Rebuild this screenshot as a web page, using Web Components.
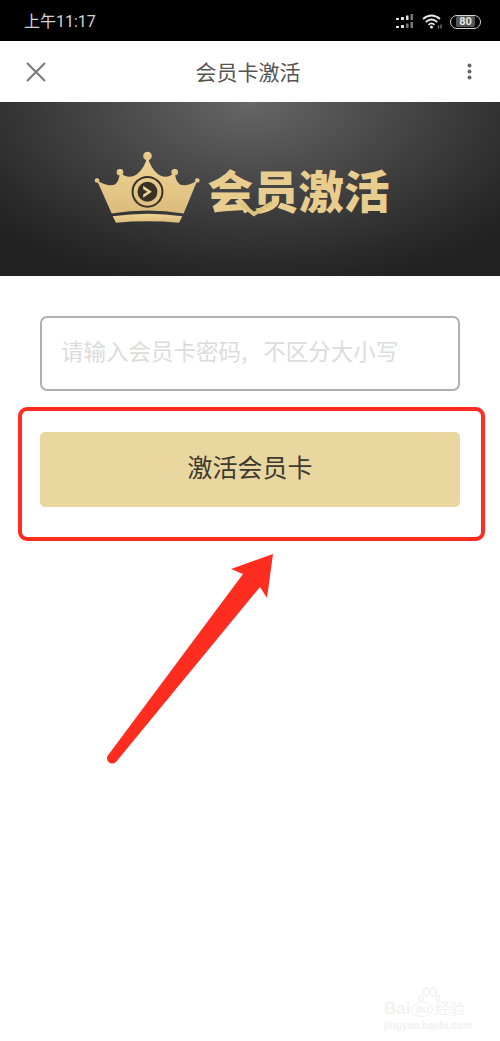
<!DOCTYPE html>
<html lang="zh">
<head>
<meta charset="utf-8">
<title>会员卡激活</title>
<style>
  html, body { margin: 0; background: #fff; }
  body { font-family: "Noto Sans CJK SC", "Liberation Sans", sans-serif; }
  #page { position: relative; width: 500px; height: 1041px; overflow: hidden; }
</style>
</head>
<body>
<div id="page">
  <status-bar time="上午11:17" battery="80"></status-bar>
  <nav-bar>会员卡激活</nav-bar>
  <promo-banner>会员激活</promo-banner>
  <activate-form placeholder="请输入会员卡密码, 不区分大小写">激活会员卡</activate-form>
  <red-markup></red-markup>
  <baidu-mark></baidu-mark>
</div>

<script>
class StatusBar extends HTMLElement {
  connectedCallback() {
    this.attachShadow({ mode: "open" });
    this.shadowRoot.innerHTML = `
      <style>
        :host { display: flex; align-items: center; justify-content: space-between; height: 41px; padding: 0 19px 0 24px; box-sizing: border-box; background: #000; color: #d4d4d4; }
        .time { font: 16px/1 Roboto, "Noto Sans CJK SC", sans-serif; position: relative; top: 1px; }
        .icons { display: flex; align-items: center; gap: 7px; position: relative; top: 1px; }
        svg { display: block; }
        .batt { width: 31px; height: 14px; box-sizing: border-box; border: 1.5px solid #d4d4d4; border-radius: 7px; display: flex; align-items: center; justify-content: center; }
        .batt span { background: #555; color: #e6e6e6; font: 700 11px/11px Roboto, sans-serif; padding: 0 3px; border-radius: 2px; }
      </style>
      <div class="time">${this.getAttribute("time")}</div>
      <div class="icons">
        <svg width="20" height="15" viewBox="0 0 20 15" fill="#e0e0e0">
          <rect x="1" y="4" width="3" height="2"/><rect x="6" y="3" width="3" height="3"/><rect x="11" y="1.500" width="2.500" height="4.500"/><rect x="15.500" y="0" width="2.500" height="6" fill="#777"/>
          <rect x="1" y="12" width="3" height="2"/><rect x="6" y="11" width="3" height="3"/><rect x="11" y="9.500" width="2.500" height="4.500" fill="#777"/><rect x="15.500" y="8" width="2.500" height="6" fill="#777"/>
        </svg>
        <svg width="21" height="15" viewBox="0 0 21 15" fill="none" stroke="#e8e8e8" stroke-width="1.800">
          <path d="M1 5 Q9.500 -2 18 5"/><path d="M3.800 8 Q9.500 3 15.200 8"/><path d="M6.500 10.800 Q9.500 8 12.500 10.800"/>
          <circle cx="9.500" cy="13" r="1.500" fill="#e8e8e8" stroke="none"/>
          <path d="M16.500 14.500v-3M19 14.500v-4" stroke="#888" stroke-width="1.200"/>
        </svg>
        <div class="batt"><span>${this.getAttribute("battery")}</span></div>
      </div>`;
  }
}

class NavBar extends HTMLElement {
  connectedCallback() {
    this.attachShadow({ mode: "open" });
    this.shadowRoot.innerHTML = `
      <style>
        :host { display: grid; grid-template-columns: 1fr auto 1fr; align-items: center; height: 61px; padding: 0 28px 0 26px; box-sizing: border-box; background: #fff; color: #555; }
        .title { font-size: 21px; line-height: 1; position: relative; left: -1px; }
        svg { display: block; }
        .more { justify-self: end; }
      </style>
      <svg width="20" height="20" viewBox="0 0 20 20" stroke="#777" stroke-width="2" fill="none"><path d="M1 1 L19 19 M19 1 L1 19"/></svg>
      <div class="title"><slot></slot></div>
      <svg class="more" width="5" height="17" viewBox="0 0 5 17" fill="#666"><circle cx="2.500" cy="2.500" r="2"/><circle cx="2.500" cy="8.500" r="2"/><circle cx="2.500" cy="14.500" r="2"/></svg>`;
  }
}

class PromoBanner extends HTMLElement {
  connectedCallback() {
    this.attachShadow({ mode: "open" });
    this.shadowRoot.innerHTML = `
      <style>
        :host { display: flex; align-items: center; justify-content: center; gap: 6px; height: 174px; padding-right: 16px; box-sizing: border-box; background: radial-gradient(340px 190px at 50% 0, #666 0%, #464646 45%, #2a2a2a 85%, #222 100%); }
        svg { display: block; }
        .crown { position: relative; top: -2px; }
        .word { position: relative; top: 1px; font-size: 45.500px; line-height: 1; font-weight: 900; color: #e9cd8e; white-space: nowrap; }
        .tick { position: absolute; left: 32px; top: 34px; }
      </style>
      <svg class="crown" width="107" height="73" viewBox="45 55 320 220">
        <defs><linearGradient id="gold" x1="0" y1="0" x2="0" y2="1"><stop offset="0" stop-color="#efd595"/><stop offset="1" stop-color="#dcbc7c"/></linearGradient></defs>
        <g fill="url(#gold)">
          <circle cx="53" cy="144" r="7"/><circle cx="122" cy="119" r="10"/><circle cx="205" cy="70" r="13"/><circle cx="287" cy="119" r="10"/><circle cx="355" cy="144" r="7"/>
          <path d="M53 144 Q88 165 108 155 Q120 145 122 119 Q146 142 172 126 Q196 108 205 70 Q214 108 238 126 Q264 142 287 119 Q289 145 302 155 Q322 165 355 144 L314 243 Q205 226 97 243 Z"/>
          <path d="M100 252 Q205 236 310 252 L300 271 Q205 262 110 271 Z"/>
        </g>
        <circle cx="205" cy="178" r="45" fill="none" stroke="#3a3125" stroke-width="6"/>
        <circle cx="205" cy="178" r="30" fill="#3a3125"/>
        <path d="M192 160 L218 178 L192 196 L192 186 L205 178 L192 170 Z" fill="#f0d592"/>
      </svg>
      <div class="word"><slot></slot>
        <svg class="tick" width="40" height="16" viewBox="0 0 40 16" fill="none" stroke="#e0c27f" stroke-width="4"><path d="M2 3 L15 13 L33 2"/></svg>
      </div>`;
  }
}

class ActivateForm extends HTMLElement {
  connectedCallback() {
    this.attachShadow({ mode: "open" });
    this.shadowRoot.innerHTML = `
      <style>
        :host { display: flex; flex-direction: column; gap: 41px; padding: 40px 40px 0; }
        .field { height: 75px; box-sizing: border-box; border: 2px solid #b0b0b0; border-radius: 7px; display: flex; align-items: center; padding: 0 0 7px 19px; color: #dcdcdc; font-size: 22.500px; word-spacing: 11px; white-space: nowrap; }
        .btn { height: 75px; box-sizing: border-box; padding-bottom: 7px; border-radius: 5px; background: #e9d79f; color: #3c3a30; font-size: 25px; display: flex; align-items: center; justify-content: center; }
      </style>
      <div class="field">${this.getAttribute("placeholder")}</div>
      <div class="btn"><slot></slot></div>`;
  }
}

class RedMarkup extends HTMLElement {
  connectedCallback() {
    this.attachShadow({ mode: "open" });
    this.shadowRoot.innerHTML = `
      <style>
        :host { position: absolute; inset: 0; pointer-events: none; }
        svg { display: block; }
      </style>
      <svg width="500" height="1041" viewBox="0 0 500 1041">
        <rect x="20" y="409" width="463" height="130" rx="7" fill="none" stroke="#ff2d20" stroke-width="4"/>
        <path d="M273 554 L231 569 L243 574 L107.500 756 Q106 759 108.500 762 Q112 765 116 762 L260 587 L267 598 Z" fill="#ff2d20"/>
      </svg>`;
  }
}

class BaiduMark extends HTMLElement {
  connectedCallback() {
    this.attachShadow({ mode: "open" });
    this.shadowRoot.innerHTML = `
      <style>
        :host { position: absolute; right: 0; bottom: 0; width: 130px; height: 71px; color: #f1f1f1; font-family: "Liberation Sans", "Noto Sans CJK SC", sans-serif; pointer-events: none; }
        .top { position: absolute; left: 14px; top: 30px; display: flex; align-items: flex-end; gap: 1px; font-size: 17px; font-weight: 700; line-height: 17px; }
        .du { font-size: 11px; line-height: 13px; border: 1px solid #f1f1f1; border-radius: 50%; padding: 0 3px; margin-right: 1px; }
        .han { font-size: 15px; line-height: 17px; font-weight: 400; }
        .url { position: absolute; left: 14px; top: 50px; font-size: 10px; line-height: 12px; font-weight: 700; white-space: nowrap; }
        svg { position: absolute; left: 48px; top: 17px; }
      </style>
      <svg width="22" height="16" viewBox="0 0 22 16" fill="none" stroke="#f1f1f1" stroke-width="1.500"><ellipse cx="3" cy="11" rx="2" ry="3"/><ellipse cx="8" cy="5" rx="3" ry="4"/><ellipse cx="15" cy="5" rx="3" ry="4"/><ellipse cx="20" cy="11" rx="1.500" ry="3"/></svg>
      <div class="top"><span>Bai</span><span class="du">du</span><span class="han">经验</span></div>
      <div class="url">jingyan.baidu.com</div>`;
  }
}

customElements.define("status-bar", StatusBar);
customElements.define("nav-bar", NavBar);
customElements.define("promo-banner", PromoBanner);
customElements.define("activate-form", ActivateForm);
customElements.define("red-markup", RedMarkup);
customElements.define("baidu-mark", BaiduMark);
</script>
</body>
</html>
